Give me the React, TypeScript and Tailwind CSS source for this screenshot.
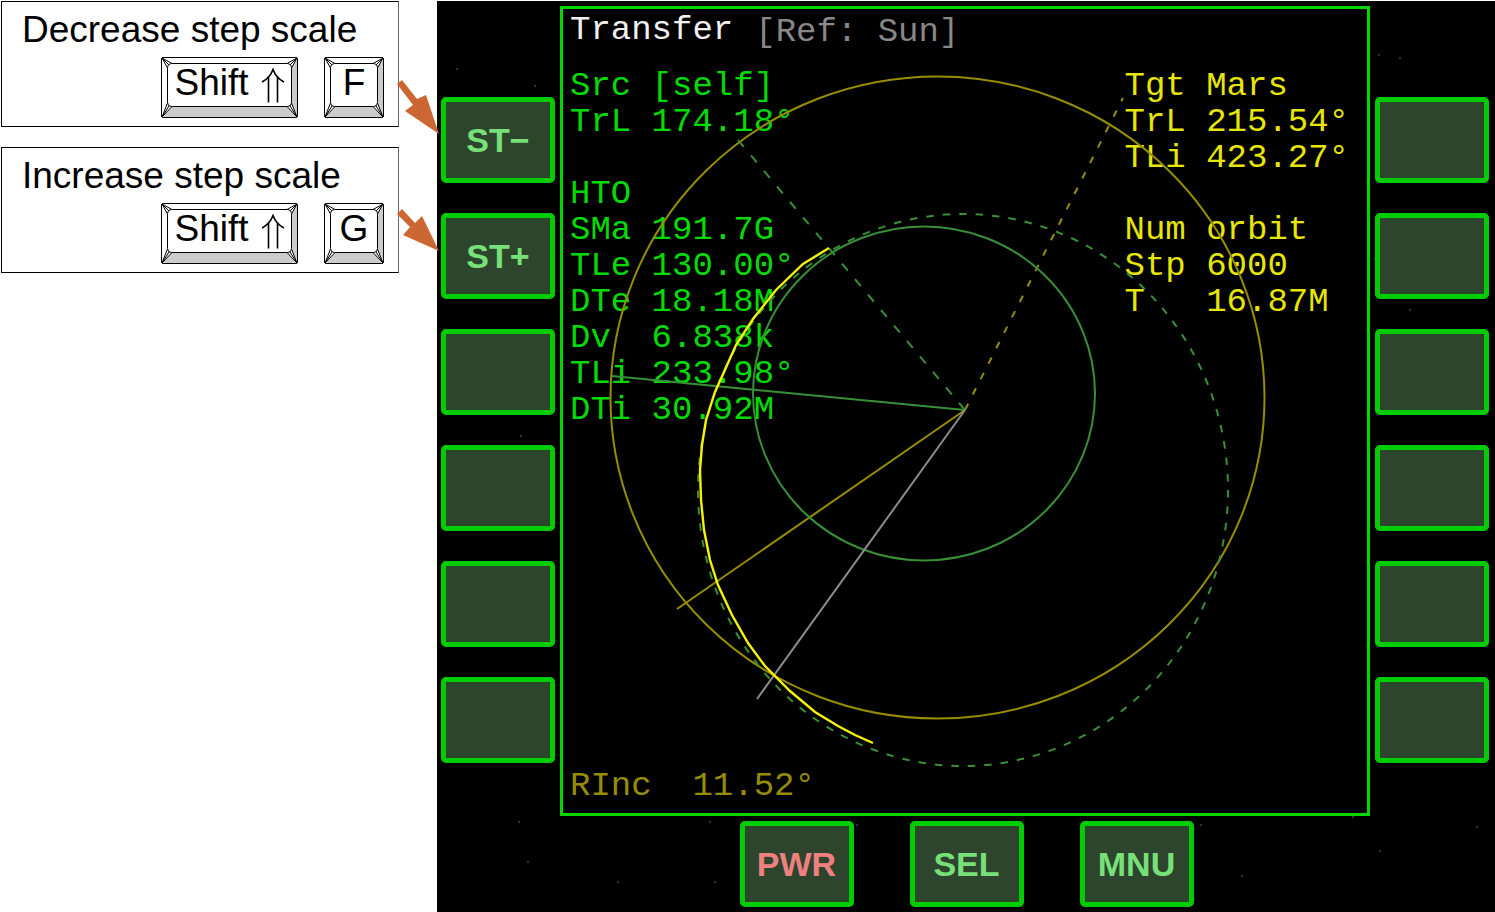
import type { ReactNode } from "react";

const SANS = "font-['Liberation_Sans',Arial,sans-serif]";
const MONO = "font-['Liberation_Mono','Courier_New',monospace]";

const STARS: [number, number][] = [
  [98, 85], [106, 111], [942, 54], [963, 57], [973, 309], [273, 821], [420, 824],
  [181, 881], [278, 881], [764, 824], [805, 875], [916, 816], [943, 850], [91, 861],
  [20, 68], [84, 435], [938, 258], [1047, 130], [1040, 826], [82, 821],
];

function Key({ width, children }: { width: number; children: ReactNode }) {
  const r = width - 1;
  return (
    <kbd className={`relative flex h-[61px] items-start justify-center pt-[5px] text-[37px] leading-[42px] ${SANS}`}>
      <svg
        className="absolute inset-0"
        width={width}
        height={61}
        viewBox={`0 0 ${width} 61`}
        fill="none"
        stroke="#000"
        aria-hidden="true"
      >
        <rect x={0.5} y={0.5} width={r} height={60} rx={2} fill="#fff" />
        <path d={`M7 50H${r - 6}L${r - 1} 60H2Z`} fill="#ccc" stroke="none" />
        <path d={`M${r - 5} 6L${r} 2V58L${r - 5} 49Z`} fill="#ccc" stroke="none" />
        <path
          d={`M1 1L11 6.500L6.500 11ZL8 8M${r} 1L${r - 10} 6.500L${r - 5.5} 11ZL${r - 7} 8M1 60L6.500 46L11 49.500ZL8 49M${r} 60L${r - 5.5} 46L${r - 10} 49.500ZL${r - 7} 49`}
          fill="#fff"
        />
        <rect x={6.5} y={6.5} width={r - 12} height={43} rx={4} fill="#fff" />
        <rect x={0.5} y={0.5} width={r} height={60} rx={2} />
      </svg>
      <span className="relative flex items-start">{children}</span>
    </kbd>
  );
}

function Shortcut({ title, letter, arrow }: { title: string; letter: string; arrow: string }) {
  return (
    <section className="relative h-[126px] border border-black border-r-[#666] bg-white pr-[14px] pl-5">
      <h2 className={`pt-[7px] text-[37px] leading-[42px] whitespace-nowrap ${SANS}`}>{title}</h2>
      <div className="mt-1.5 flex justify-end gap-[26px]">
        <div className="w-[137px]">
          <Key width={137}>
            <span>Shift</span>
            <svg className="mt-1.5 ml-3" width="24" height="35" viewBox="0 0 24 35" fill="none" stroke="#000" strokeWidth="1.6" aria-hidden="true">
              <path d="M7.5 8V34.500M16.500 8V34.500M1 14C6 11.500 10 7 12 1.500C14 7 18 11.500 23 14" />
            </svg>
          </Key>
        </div>
        <div className="w-[60px]">
          <Key width={60}>{letter}</Key>
        </div>
      </div>
      <svg className="absolute top-[59px] left-[394px] z-10" width="44" height="75" viewBox="0 0 44 75" fill="#cc6633" aria-hidden="true">
        <path d={arrow} />
      </svg>
    </section>
  );
}

function MfdButton({ label = "", name, danger = false }: { label?: string; name: string; danger?: boolean }) {
  return (
    <button
      type="button"
      aria-label={name}
      className={`flex h-[86px] w-[114px] shrink-0 items-center justify-center rounded-[5px] border-[5px] border-[#00cc00] bg-[#2d442d] text-[34px] leading-none font-bold ${SANS} ${danger ? "text-[#ee8080]" : "text-[#78e078]"}`}
    >
      {label}
    </button>
  );
}

function Lines({ rows }: { rows: string[] }) {
  return (
    <div>
      {rows.map((row, i) => (
        <p key={i} className="h-9 whitespace-pre">
          {row}
        </p>
      ))}
    </div>
  );
}

function OrbitPlot() {
  return (
    <svg
      className="pointer-events-none absolute inset-0 h-full w-full"
      viewBox="563 9 804 804"
      fill="none"
      strokeWidth="2"
      role="img"
      aria-label="Transfer orbit plot"
    >
      <g stroke="#978d00">
        <ellipse cx="937.5" cy="397.5" rx="327" ry="321" />
        <path d="M965 410L677 609" />
        <path d="M965 410L1123 98" strokeDasharray="7 10.3" />
      </g>
      <g stroke="#388f38">
        <ellipse cx="924" cy="393.500" rx="171" ry="167" />
        <ellipse cx="963" cy="490" rx="265" ry="276" strokeDasharray="7.500 9" />
        <path d="M965 410L612 376" />
        <path d="M738 140L965 410" strokeDasharray="9 11.200" />
      </g>
      <path stroke="#8c8c8c" d="M965 410L757 699" />
      <path
        stroke="#f4f400"
        strokeWidth="2.4"
        d="M829 248L803 264L776 290L753 319L736 345L724 372L715 392L706 420L702 445L700 470L701 500L704 530L710 560L718 585L732 615L748 643L765 666L790 691L815 712L838 726L855 735L873 743"
      />
    </svg>
  );
}

export default function App() {
  return (
    <main className="flex min-h-screen bg-white text-black">
      <aside className="flex w-[437px] shrink-0 flex-col gap-5 pt-px pr-[38px] pl-px">
        <Shortcut title="Decrease step scale" letter="F" arrow="M1 23L6 19L21 38L30 34L43 73L9 50L17 44Z" />
        <Shortcut title="Increase step scale" letter="G" arrow="M1 7L6 2L19 16L26 9L43 44L7 28L14 20Z" />
      </aside>

      <div className="relative mt-px flex flex-1 flex-col gap-[5px] bg-black pt-[5px] pr-1.5 pl-1">
        <svg className="absolute inset-0 h-full w-full" fill="#303030" aria-hidden="true">
          {STARS.map(([x, y]) => (
            <circle key={`${x}-${y}`} cx={x} cy={y} r="1.2" />
          ))}
        </svg>

        <div className="relative flex items-start gap-[5px]">
          <div className="flex flex-col gap-[30px] pt-[91px]">
            <MfdButton label="ST−" name="Decrease step scale" />
            <MfdButton label="ST+" name="Increase step scale" />
            {[3, 4, 5, 6].map((n) => (
              <MfdButton key={n} name={`Left ${n}`} />
            ))}
          </div>

          <div className={`relative flex aspect-square min-w-0 flex-1 flex-col border-[3px] border-[#00d800] bg-black pt-[3px] pr-[18px] pb-[9px] pl-[7px] text-[34px] leading-9 ${MONO}`}>
            <header className="flex gap-[22px]">
              <h1 className="text-[#f0f0f0]">Transfer</h1>
              <p className="pt-0.5 text-[#888888]">[Ref: Sun]</p>
            </header>
            <div className="mt-[18px] flex justify-between">
              <div className="text-[#00dc00]">
                <Lines
                  rows={[
                    "Src [self]",
                    "TrL 174.18°",
                    "",
                    "HTO",
                    "SMa 191.7G",
                    "TLe 130.00°",
                    "DTe 18.18M",
                    "Dv  6.838k",
                    "TLi 233.98°",
                    "DTi 30.92M",
                  ]}
                />
              </div>
              <div className="text-[#e6e600]">
                <Lines rows={["Tgt Mars", "TrL 215.54°", "TLi 423.27°", "", "Num orbit", "Stp 6000", "T   16.87M"]} />
              </div>
            </div>
            <p className="mt-auto whitespace-pre text-[#978d00]">RInc  11.52°</p>
            <OrbitPlot />
          </div>

          <div className="flex flex-col gap-[30px] pt-[91px]">
            {[1, 2, 3, 4, 5, 6].map((n) => (
              <MfdButton key={n} name={`Right ${n}`} />
            ))}
          </div>
        </div>

        <div className="relative flex justify-center gap-14 pl-[3px]">
          <MfdButton label="PWR" name="Power" danger />
          <MfdButton label="SEL" name="Select" />
          <MfdButton label="MNU" name="Menu" />
        </div>
      </div>
    </main>
  );
}
